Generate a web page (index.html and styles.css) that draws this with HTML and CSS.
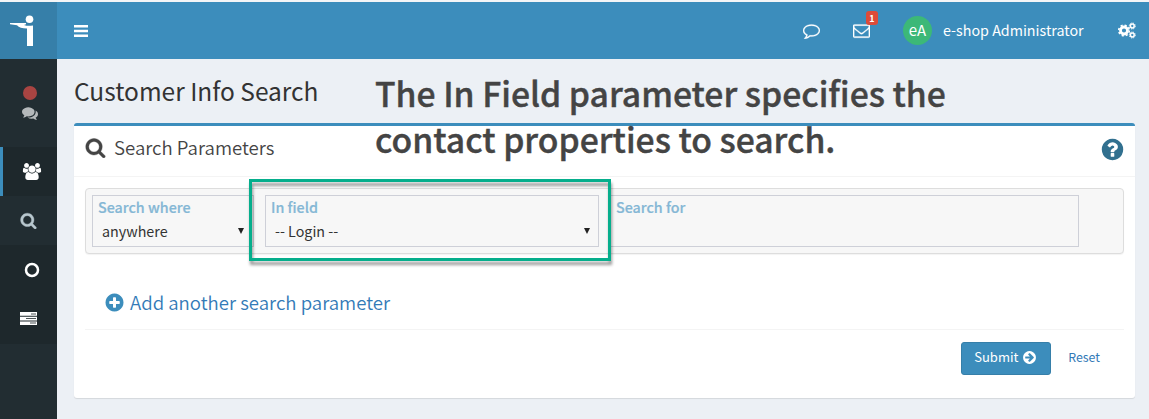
FILE: index.html
```html
<!DOCTYPE html>
<html lang="en">
<head>
    <meta charset="UTF-8" />
    <meta name="viewport" content="width=device-width, initial-scale=1.0" />
    <title>Customer Info Search</title>
    <link rel="stylesheet" href="styles.css">
</head>
<body>

    <!-- Top bar -->
    <header class="main-header">
        <a href="#" class="logo">
            <svg width="24" height="32" viewBox="0 0 24 32" fill="#fff">
                <circle cx="19.5" cy="4.3" r="3.8" />
                <path d="M0 8h16v1.300l-2 .7c3 1 5 1 9 .5v20.500h-6V13.500c-5-.2-8-.8-10-3.200L0 9.200z" />
            </svg>
        </a>
        <nav class="navbar">
            <a href="#" class="sidebar-toggle">
                <svg width="14" height="12" viewBox="0 0 14 12" fill="#fff"><path d="M0 0h14v2.400H0zM0 4.800h14v2.400H0zM0 9.600h14V12H0z" /></svg>
            </a>
            <a href="#" class="nav-chat">
                <svg width="17" height="17" viewBox="0 0 1792 1792" fill="#fff" stroke="#fff" stroke-width="30"><path d="M896 384q-204 0-381.5 69.5t-282 187.500-104.500 255q0 112 71.500 213.500t201.500 175.500l87 50-27 96q-24 91-70 172 152-63 275-171l43-38 57 6q69 8 130 8 204 0 381.500-69.500t282-187.500 104.500-255-104.500-255-282-187.500-381.500-69.500zm896 512q0 174-120 321.500t-326 233-450 85.500q-70 0-145-8-198 175-460 242-49 14-114 22h-5q-15 0-27-10.500t-16-27.500v-1q-3-4-.5-12t2-10 4.500-9.500l6-9 7-8.500 8-9q7-8 31-34.500t34.500-38 31-39.500 32.500-51 27-59 26-76q-157-89-247.500-220t-90.500-281q0-174 120-321.500t326-233 450-85.500 450 85.500 326 233 120 321.500z" /></svg>
            </a>
            <a href="#" class="nav-mail">
                <svg width="17" height="17" viewBox="0 0 1792 1792" fill="#fff" stroke="#fff" stroke-width="30"><path d="M1664 1504v-768q-32 36-69 66-268 206-426 338-51 43-83 67t-86.500 48.500-102.500 24.500h-2q-48 0-102.500-24.500t-86.500-48.500-83-67q-158-132-426-338-37-30-69-66v768q0 13 9.500 22.500t22.500 9.500h1472q13 0 22.500-9.500t9.500-22.500zm0-1051v-24.500l-.5-13-3-12.500-5.500-9-9-7.500-14-2.500h-1472q-13 0-22.500 9.500t-9.500 22.500q0 168 147 284 193 152 401 317 6 5 35 29.500t46 37.500 44.500 31.500 50.500 27.500 43 9h2q20 0 43-9t50.500-27.500 44.500-31.500 46-37.500 35-29.500q208-165 401-317 54-43 100.500-115.500t46.500-131.500zm128-37v1088q0 66-47 113t-113 47h-1472q-66 0-113-47t-47-113v-1088q0-66 47-113t113-47h1472q66 0 113 47t47 113z" /></svg>
                <span class="badge">1</span>
            </a>
            <a href="#" class="user-menu">
                <span class="avatar">eA</span>
                <span class="user-name">e-shop Administrator</span>
            </a>
            <a href="#" class="nav-settings">
                <svg width="18" height="17" viewBox="0 0 18 17" fill="none" stroke="#fff">
                    <circle cx="6" cy="8.500" r="3.500" stroke-width="2.800" />
                    <circle cx="6" cy="8.500" r="5.300" stroke-width="1.600" stroke-dasharray="2.160 2" />
                    <circle cx="14.300" cy="4" r="1.900" stroke-width="1.500" />
                    <circle cx="14.300" cy="4" r="3" stroke-width="1" stroke-dasharray="1.300 1.060" />
                    <circle cx="14.300" cy="13" r="1.900" stroke-width="1.500" />
                    <circle cx="14.300" cy="13" r="3" stroke-width="1" stroke-dasharray="1.300 1.060" />
                </svg>
            </a>
        </nav>
    </header>

    <div class="wrapper">
        <!-- Sidebar -->
        <aside class="sidebar">
            <div class="status">
                <span class="status-dot"></span>
                <svg width="16" height="16" viewBox="0 0 1792 1792" fill="#b5b9bb"><path d="M1408 768q0 139-94 257t-256.500 186.500-353.500 68.500q-86 0-176-16-124 88-278 128-36 9-86 16h-3q-11 0-20.500-8t-11.500-21q-1-3-1-6.500t.5-6.500 2-6l2.500-5 3.500-5.500 4-5 4.500-5 4-4.500q5-6 23-25t26-29.500 22.500-29 25-38.500 20.500-44q-124-72-195-177t-71-224q0-139 94-257t256.500-186.500 353.500-68.500 353.500 68.500 256.500 186.500 94 257zm384 256q0 120-71 224.500t-195 176.500q10 24 20.500 44t25 38.500 22.500 29 26 29.500 23 25q1 1 4 4.500t4.500 5 4 5 3.500 5.500l2.500 5 2 6 .5 6.500-1 6.500q-3 14-13 22t-22 7q-50-7-86-16-154-40-278-128-90 16-176 16-271 0-472-132 58 4 88 4 161 0 309-45t264-129q125-92 192-212t67-254q0-77-23-152 129 71 204 178t75 230z" /></svg>
            </div>
            <a href="#" class="menu-item active">
                <svg width="20" height="17" viewBox="0 0 2048 1792" fill="#fff"><path d="M657 896q-162 5-265 128h-134q-82 0-138-40.500t-56-118.500q0-353 124-353 6 0 43.500 21t97.500 42.500 119 21.500q67 0 133-23-5 37-5 66 0 139 81 256zm1071 637q0 120-73 189.500t-194 69.500h-874q-121 0-194-69.500t-73-189.500q0-53 3.500-103.500t14-109 26.500-108.500 43-97.500 62-81 85.500-53.500 111.500-20q10 0 43 21.500t73 48 107 48 135 21.500 135-21.500 107-48 73-48 43-21.500q61 0 111.500 20t85.500 53.500 62 81 43 97.500 26.500 108.500 14 109 3.500 103.500zm-1024-1277q0 106-75 181t-181 75-181-75-75-181 75-181 181-75 181 75 75 181zm704 384q0 159-112.500 271.500t-271.500 112.500-271.500-112.500-112.500-271.500 112.500-271.500 271.500-112.500 271.500 112.500 112.500 271.500zm576 225q0 78-56 118.500t-138 40.500h-134q-103-123-265-128 81-117 81-256 0-29-5-66 66 23 133 23 59 0 119-21.500t97.500-42.500 43.500-21q124 0 124 353zm-128-609q0 106-75 181t-181 75-181-75-75-181 75-181 181-75 181 75 75 181z" /></svg>
            </a>
            <a href="#" class="menu-item sub-search">
                <svg width="17" height="17" viewBox="0 0 1792 1792" fill="#b8c7ce" stroke="#b8c7ce" stroke-width="40"><path d="M1216 832q0-185-131.500-316.500t-316.500-131.500-316.500 131.500-131.500 316.500 131.500 316.500 316.500 131.500 316.500-131.500 131.500-316.500zm512 832q0 52-38 90t-90 38q-54 0-90-38l-343-342q-179 124-399 124-143 0-273.500-55.500t-225-150-150-225-55.500-273.500 55.500-273.500 150-225 225-150 273.500-55.500 273.500 55.500 225 150 150 225 55.500 273.500q0 220-124 399l343 343q37 37 37 90z" /></svg>
            </a>
            <div class="submenu">
                <a href="#" class="menu-item sub-circle">
                    <svg width="16" height="16" viewBox="0 0 16 16"><circle cx="8" cy="8" r="6" fill="none" stroke="#fff" stroke-width="2.500" /></svg>
                </a>
                <a href="#" class="menu-item">
                    <svg width="17" height="13" viewBox="0 0 17 13">
                        <path fill="#fff" d="M0 0h17v3.700H0zM0 4.700h17v3.700H0zM0 9.400h17V13H0z" />
                        <path stroke="#1e282c" stroke-width=".8" d="M11 2h5M6 6.500h10M10 11h6" />
                    </svg>
                </a>
            </div>
        </aside>

        <!-- Content -->
        <main class="content">
            <h1 class="page-title">Customer Info Search</h1>
            <p class="callout">The In Field parameter specifies the<br>contact properties to search.</p>

            <section class="box">
                <div class="box-header">
                    <svg class="title-icon" width="21" height="21" viewBox="0 0 1792 1792" fill="#444" stroke="#444" stroke-width="30"><path d="M1216 832q0-185-131.500-316.500t-316.500-131.500-316.500 131.500-131.500 316.500 131.500 316.500 316.500 131.500 316.500-131.500 131.500-316.500zm512 832q0 52-38 90t-90 38q-54 0-90-38l-343-342q-179 124-399 124-143 0-273.500-55.500t-225-150-150-225-55.500-273.500 55.500-273.500 150-225 225-150 273.500-55.500 273.500 55.500 225 150 150 225 55.500 273.500q0 220-124 399l343 343q37 37 37 90z" /></svg>
                    <h3 class="box-title">Search Parameters</h3>
                    <svg class="help" width="25" height="25" viewBox="0 0 1792 1792" fill="#31708f"><path d="M1024 1376v-192q0-14-9-23t-23-9h-192q-14 0-23 9t-9 23v192q0 14 9 23t23 9h192q14 0 23-9t9-23zm256-672q0-88-55.500-163t-138.500-116-170-41q-243 0-371 213-15 24 8 42l132 100q7 6 19 6 16 0 25-12 53-68 86-92 34-24 86-24 48 0 85.500 26t37.500 59q0 38-20 61t-68 45q-63 28-115.500 86.500t-52.500 125.500v36q0 14 9 23t23 9h192q14 0 23-9t9-23q0-19 21.500-49.500t54.500-49.500q32-18 49-28.500t46-35 44.500-48 28-60.500 12.500-81zm384 192q0 209-103 385.500t-279.500 279.500-385.500 103-385.500-103-279.500-279.500-103-385.500 103-385.500 279.500-279.500 385.500-103 385.500 103 279.500 279.500 103 385.500z" /></svg>
                </div>

                <div class="box-body">
                    <div class="search-row">
                        <div class="field field-where">
                            <label>Search where</label>
                            <div class="select">anywhere <span class="caret"></span></div>
                        </div>
                        <div class="field field-in">
                            <label>In field</label>
                            <div class="select">-- Login -- <span class="caret"></span></div>
                            <div class="highlight"></div>
                        </div>
                        <div class="field field-for">
                            <label>Search for</label>
                        </div>
                    </div>
                    <a href="#" class="add-param">
                        <svg width="21" height="21" viewBox="0 0 1792 1792" fill="#3c8dbc"><path d="M1344 960v-128q0-26-19-45t-45-19h-256v-256q0-26-19-45t-45-19h-128q-26 0-45 19t-19 45v256h-256q-26 0-45 19t-19 45v128q0 26 19 45t45 19h256v256q0 26 19 45t45 19h128q26 0 45-19t19-45v-256h256q26 0 45-19t19-45zm320-64q0 209-103 385.500t-279.500 279.500-385.500 103-385.500-103-279.500-279.500-103-385.500 103-385.500 279.500-279.500 385.500-103 385.500 103 279.500 279.500 103 385.500z" /></svg>
                        <span>Add another search parameter</span>
                    </a>
                    <div class="actions">
                        <button class="btn-submit">
                            <span>Submit</span>
                            <svg width="15" height="15" viewBox="0 0 1792 1792" fill="#fff"><path d="M1413 896q0-27-18-45l-91-91-362-362q-18-18-45-18t-45 18l-91 91q-18 18-18 45t18 45l189 189h-502q-26 0-45 19t-19 45v128q0 26 19 45t45 19h502l-189 189q-19 19-19 45t19 45l91 91q18 18 45 18t45-18l362-362 91-91q18-18 18-45zm251 0q0 209-103 385.500t-279.500 279.500-385.500 103-385.500-103-279.500-279.500-103-385.500 103-385.500 279.500-279.500 385.500-103 385.500 103 279.500 279.500 103 385.500z" /></svg>
                        </button>
                        <a href="#" class="btn-reset">Reset</a>
                    </div>
                </div>
            </section>
        </main>
    </div>

</body>
</html>
```
FILE: styles.css
```css
* {
    box-sizing: border-box;
}

body {
    margin: 0;
    height: 419px;
    overflow: hidden;
    border-top: 2px solid #f3f5f7;
    background-color: #ecf0f5;
    color: #333;
    font-family: "Source Sans Pro", "Noto Sans CJK SC", sans-serif;
    font-size: 14px;
    display: flex;
    flex-direction: column;
}

a {
    text-decoration: none;
    color: #337ab7;
}

svg {
    display: block;
    flex: none;
}

/* Header */
.main-header {
    display: flex;
    height: 57px;
    flex: none;
}

.logo {
    width: 57px;
    background-color: #367fa9;
    padding: 13px 0 0 10px;
}

.navbar {
    flex: 1;
    display: flex;
    align-items: center;
    background-color: #3c8dbc;
    padding: 0 13px 0 17px;
}

.sidebar-toggle {
    margin-right: auto;
}

.nav-mail {
    position: relative;
    margin-left: 33px;
}

.badge {
    position: absolute;
    left: 13px;
    top: -11px;
    width: 12px;
    height: 14px;
    border-radius: 3px;
    background-color: #dd4b39;
    color: white;
    font-size: 9px;
    font-weight: bold;
    line-height: 15px;
    text-align: center;
}

.user-menu {
    display: flex;
    align-items: center;
    margin-left: 33px;
    color: white;
}

.avatar {
    width: 29px;
    height: 29px;
    border-radius: 50%;
    background-color: #3cb878;
    font-size: 15px;
    line-height: 28px;
    text-align: center;
}

.user-name {
    width: 141px;
    margin-left: 11px;
    padding-bottom: 1px;
    font-size: 14.3px;
    line-height: 20px;
    white-space: nowrap;
}

.nav-settings {
    margin-left: 34px;
}

/* Sidebar */
.wrapper {
    display: flex;
    flex: 1;
}

.sidebar {
    width: 57px;
    background-color: #222d32;
}

.status {
    height: 88px;
    padding: 27px 0 0 3px;
    display: flex;
    flex-direction: column;
    align-items: center;
    gap: 5px;
}

.status-dot {
    width: 14px;
    height: 14px;
    border-radius: 50%;
    background-color: #a94442;
}

.menu-item {
    display: flex;
    align-items: center;
    height: 49px;
    padding-left: 20px;
}

.menu-item.active {
    background-color: #1e282c;
    border-left: 3px solid #3c8dbc;
    padding-left: 19px;
}

.menu-item.sub-search {
    padding: 0 0 0 20px;
}

.submenu {
    height: 99px;
    background-color: #1e282c;
}

.menu-item.sub-circle {
    padding: 1px 0 0 24px;
}

/* Content */
.content {
    position: relative;
    flex: 1;
    padding: 15px 14px 0 17px;
}

.page-title {
    margin: 0;
    height: 49px;
    font-size: 24.5px;
    font-weight: normal;
    line-height: 34px;
}

.callout {
    position: absolute;
    left: 318px;
    top: 11px;
    margin: 0;
    color: #444;
    font-size: 33.7px;
    font-weight: 500;
    -webkit-text-stroke: 0.4px #444;
    line-height: 46px;
    white-space: nowrap;
}

.box {
    height: 275px;
    border-top: 3px solid #3c8dbc;
    border-radius: 3px;
    background-color: white;
    box-shadow: 0 1px 1px rgba(0, 0, 0, 0.1);
}

.box-header {
    display: flex;
    align-items: flex-start;
    height: 51px;
    border-bottom: 1px solid #f4f4f4;
    padding: 11px 10px 0 11px;
}

.box-title {
    margin: -2px auto 0 8px;
    color: #444;
    font-size: 18.6px;
    font-weight: 350;
    line-height: 24px;
}

.box-body {
    padding: 11px 11px 0;
}

.search-row {
    display: flex;
    height: 66px;
    border: 1px solid #ddd;
    border-radius: 4px;
    background-color: #f7f7f7;
    box-shadow: 0 1px 1px rgba(0, 0, 0, 0.05);
    padding: 6px;
}

.field {
    position: relative;
    height: 52px;
    border: 1px solid #ced0d8;
    padding: 1px 5px;
}

.field-where {
    width: 162px;
    margin-right: 11px;
}

.field-where .caret {
    margin-right: 1px;
}

.field-in {
    width: 334px;
    margin-right: 11px;
}

.field-for {
    width: 469px;
}

label {
    display: block;
    color: #85b7d5;
    font-size: 14.3px;
    font-weight: 500;
    -webkit-text-stroke: 0.2px #85b7d5;
    line-height: 20px;
}

.select {
    display: flex;
    justify-content: space-between;
    align-items: center;
    height: 27px;
    padding: 0 3px 0 4px;
    font-size: 14.3px;
    line-height: 26px;
}

.caret {
    border: 3px solid transparent;
    border-top: 6px solid #222;
    border-bottom: 0;
}

/* Green frame drawn over the "In field" column */
.highlight {
    position: absolute;
    z-index: 1;
    left: -17px;
    top: -17px;
    width: 362px;
    height: 82px;
    border: 3px solid #06ae8c;
    filter: drop-shadow(1px 4px 1.5px rgba(0, 0, 0, 0.4));
}

.add-param {
    display: flex;
    align-items: center;
    gap: 5px;
    height: 76px;
    border-bottom: 1px solid #f4f4f4;
    padding: 21px 0 0 19px;
    font-size: 18.6px;
    font-weight: 350;
    line-height: 24px;
}

.actions {
    display: flex;
    justify-content: flex-end;
    align-items: center;
    padding: 12px 24px 0 0;
    font-size: 13px;
}

.btn-submit {
    display: flex;
    align-items: center;
    gap: 4px;
    width: 90px;
    height: 33px;
    border: 1px solid #367fa9;
    border-radius: 3px;
    background-color: #3c8dbc;
    color: white;
    font-family: inherit;
    font-size: 13px;
    line-height: 18px;
    padding: 0 0 3px 12px;
}

.btn-reset {
    margin-left: 17px;
    padding-bottom: 3px;
    font-size: 12.4px;
    line-height: 18px;
}
```
